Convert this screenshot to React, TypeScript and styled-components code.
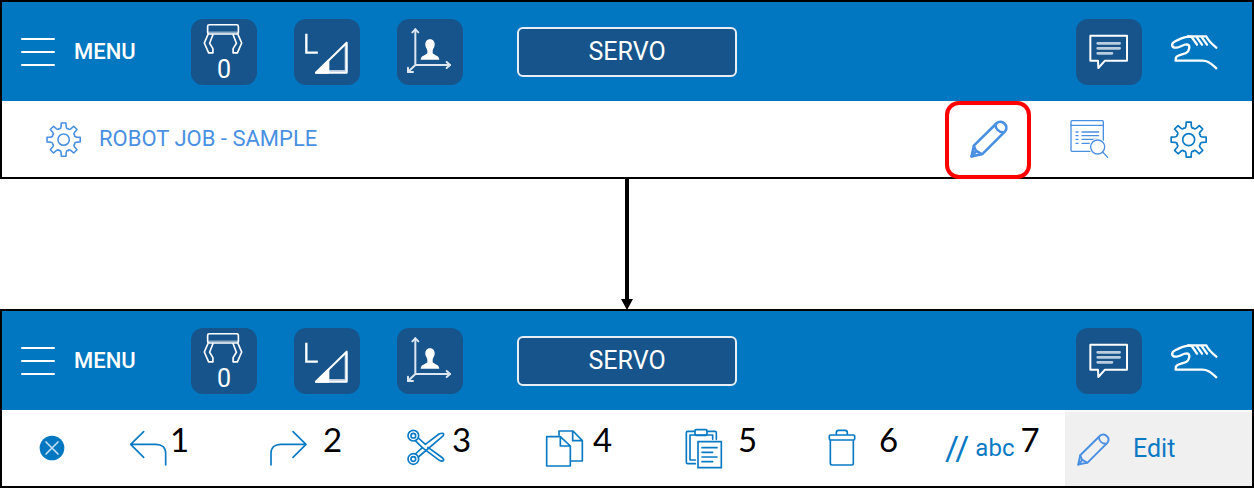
import React from 'react';
import styled, { createGlobalStyle } from 'styled-components';

const color = {
  header: '#0077c0',
  tile: '#17548b',
  accent: '#4a90e2',
  brand: '#0a7ac4',
  soft: '#bccde0',
  active: '#f0f0f0',
  marker: '#ff0000',
};

const GlobalStyle = createGlobalStyle`
  *, *::before, *::after { box-sizing: border-box; }
  body { margin: 0; background: #fff; font-family: Roboto, 'Liberation Sans', sans-serif; }
`;

const Page = styled.main`
  display: flex;
  flex-direction: column;
`;

const Screen = styled.section`
  border: 2px solid #000;
  background: #fff;
`;

const Header = styled.header`
  display: flex;
  align-items: center;
  padding: 17px 34px 16px 18px;
  background: ${color.header};
  color: #fff;
`;

const PlainButton = styled.button`
  display: flex;
  align-items: center;
  margin: 0;
  padding: 0;
  border: 0;
  background: none;
  color: inherit;
  font: inherit;
  cursor: pointer;
`;

const MenuButton = styled(PlainButton)`
  gap: 18px;
  width: 171px;
  font-size: 22px;
  font-weight: 500;
  line-height: 26px;
`;

const TileGroup = styled.div`
  display: flex;
  gap: 37px;
`;

const Tile = styled(PlainButton)`
  flex-direction: column;
  justify-content: center;
  width: 66px;
  height: 66px;
  border-radius: 12px;
  background: ${color.tile};
  font-size: 25px;
  line-height: 28px;
`;

const ServoButton = styled(PlainButton)`
  justify-content: center;
  width: 220px;
  height: 50px;
  margin-left: 54px;
  border: 2px solid #e6eef6;
  border-radius: 6px;
  background: ${color.tile};
  font-size: 25px;
  line-height: 28px;
`;

const HeaderEnd = styled.div`
  display: flex;
  align-items: center;
  gap: 28px;
  margin-left: auto;
`;

const Bar = styled.div`
  display: flex;
  height: 76px;
`;

const JobTitle = styled.h1`
  display: flex;
  align-items: center;
  gap: 18px;
  margin: 0 auto 0 0;
  padding-left: 43px;
  color: ${color.accent};
  font-size: 22px;
  font-weight: 400;
  line-height: 26px;
`;

const Actions = styled.div`
  display: flex;
  gap: 14px;
  padding-right: 21px;
`;

const Action = styled(PlainButton)<{ $marked?: boolean }>`
  position: relative;
  justify-content: center;
  width: 86px;

  &::after {
    content: '';
    display: ${(p) => (p.$marked ? 'block' : 'none')};
    position: absolute;
    inset: 0 0 -2px;
    border: 4px solid ${color.marker};
    border-radius: 14px;
  }
`;

const ArrowRow = styled.div`
  display: flex;
  justify-content: center;
`;

const CloseButton = styled(PlainButton)`
  width: 126px;
  padding-left: 37px;
`;

const Tools = styled.div`
  display: grid;
  flex: 1;
  grid-template-columns: repeat(5, 139fr) 122fr 120fr;
`;

const ToolCell = styled.div<{ $gap: number }>`
  display: flex;
  align-items: center;
  gap: ${(p) => p.$gap}px;
`;

const Callout = styled.span`
  padding-bottom: 18px;
  color: #000;
  font-family: Lato, sans-serif;
  font-size: 33px;
  line-height: 36px;
`;

const CommentButton = styled(PlainButton)`
  gap: 6px;
  color: ${color.brand};
  font-size: 24px;
  line-height: 28px;
`;

const Slashes = styled.span`
  font-size: 34px;
  line-height: 36px;
`;

const EditTab = styled(PlainButton)`
  gap: 24px;
  width: 187px;
  padding-left: 11px;
  border-top: 2px solid #fafafa;
  background: ${color.active};
  color: ${color.brand};
  font-size: 25px;
  line-height: 28px;
`;

const Glyph = styled.svg<{ $weight?: number }>`
  display: block;
  flex: none;
  overflow: visible;
  fill: none;
  stroke: currentColor;
  stroke-width: ${(p) => p.$weight ?? 5};
  stroke-linecap: round;
  stroke-linejoin: round;
`;

const ToolGlyph = styled(Glyph).attrs({ width: 40, height: 40 })`
  color: ${color.brand};
`;

/* Eight-tooth outline, built once around the origin. */
const gearPath = (() => {
  const at = (radius: number, degrees: number) => {
    const a = (degrees * Math.PI) / 180;
    return `${(radius * Math.sin(a)).toFixed(1)} ${(-radius * Math.cos(a)).toFixed(1)}`;
  };
  let d = '';
  for (let i = 0; i < 8; i += 1) {
    const c = i * 45;
    d += `${i ? 'L' : 'M'}${at(42, c - 11)} L${at(53, c - 8)} L${at(53, c + 8)} L${at(42, c + 11)} `;
    d += `Q${at(34, c + 16)} ${at(38, c + 22)} Q${at(34, c + 29)} ${at(42, c + 34)} `;
  }
  return `${d}Z`;
})();

const Gear = ({ size, tint }: { size: number; tint: string }) => (
  <Glyph width={size} height={size} viewBox="-59 -59 114 114" color={tint}>
    <path d={gearPath} />
    <circle r="18" />
  </Glyph>
);

const Pencil = ({ size, weight }: { size: number; weight: number }) => (
  <Glyph width={size} height={size} viewBox="118 90 117 117" color={color.accent} $weight={weight}>
    <path d="M126 202 L133 169 L203 100 C218 86 243 108 229 125 L159 195 Z" />
    <path d="M199 104 C200 118 210 128 225 128" />
    <path d="M133 170 L139 184 L157 195" />
    <path d="M126 202 L140 186" />
  </Glyph>
);

function TopBar() {
  return (
    <Header>
      <MenuButton type="button">
        <Glyph width="36" height="30" viewBox="0 0 36 30" $weight={2}>
          <path d="M2 2 H34 M2 15 H34 M2 28 H34" />
        </Glyph>
        MENU
      </MenuButton>
      <TileGroup>
        <Tile type="button" aria-label="Tool 0">
          <Glyph width="42" height="36" viewBox="611 64 127 108">
            <rect x="625" y="78" width="93" height="28" rx="5" />
            <path d="M628 101 H715" strokeOpacity="0.5" />
            <path d="M626 108 L615 133 L628 163 H641 V150 L631 134 L641 108" />
            <path d="M717 108 L728 133 L715 163 H702 V150 L712 134 L702 108" />
          </Glyph>
          <span>0</span>
        </Tile>
        <Tile type="button" aria-label="Low speed">
          <Glyph width="66" height="66" viewBox="72 57 198 198" $weight={6}>
            <path d="M176 214 H228 V132" stroke={color.soft} strokeWidth="8" />
            <path d="M138 218 L230 128 V218 Z" />
            <path d="M138 218 L175 182 V218 Z" fill="currentColor" />
            <g strokeWidth="7">
              <path d="M109 105 V158 H140" strokeLinecap="square" strokeLinejoin="miter" />
            </g>
          </Glyph>
        </Tile>
        <Tile type="button" aria-label="User coordinates">
          <Glyph width="66" height="66" viewBox="382 57 198 198" $weight={6}>
            <g stroke="#dce6f0">
              <path d="M437 195 V88 M437 195 H541 M437 195 L415 216" />
              <path d="M428 97 L437 88 L446 97 M531 186 L541 195 L531 204 M415 203 V216 H430" />
            </g>
            <path
              d="M481 118 C491 118 496 126 495 136 C494 144 489 147 489 153 V160 C495 167 508 166 509 179 H453 C454 166 467 167 473 160 V153 C473 147 468 144 467 136 C466 126 471 118 481 118 Z"
              fill="currentColor"
              stroke="none"
            />
          </Glyph>
        </Tile>
      </TileGroup>
      <ServoButton type="button">SERVO</ServoButton>
      <HeaderEnd>
        <Tile type="button" aria-label="Messages">
          <Glyph width="66" height="66" viewBox="79 58 198 198" $weight={6}>
            <path d="M122 108 H232 V183 H166 L146 205 L145 183 H122 Z" />
            <path d="M144 131 H210 M144 146 H210 M144 161 H187" stroke={color.soft} strokeWidth="8" />
          </Glyph>
        </Tile>
        <PlainButton type="button" aria-label="Manual teach">
          <Glyph width="48" height="40" viewBox="361 97 144 120" $weight={7}>
            <path d="M442 135 L426 112 C410 107 397 116 378 124 C362 131 365 145 380 144 C392 143 400 134 411 134 C422 135 420 147 415 155 C408 165 390 163 381 171 C377 175 378 179 378 183 H455 C476 182 485 193 500 206" />
            <path d="M415 110 H470 C475 122 488 134 500 144 M440 111 L457 135 M455 111 L472 135" />
          </Glyph>
        </PlainButton>
      </HeaderEnd>
    </Header>
  );
}

function Tool({ label, number, gap, children }: {
  label: string;
  number: number;
  gap: number;
  children: React.ReactNode;
}) {
  return (
    <ToolCell $gap={gap}>
      <PlainButton type="button" aria-label={label}>{children}</PlainButton>
      <Callout>{number}</Callout>
    </ToolCell>
  );
}

export default function App() {
  return (
    <>
      <GlobalStyle />
      <Page>
        <Screen>
          <TopBar />
          <Bar>
            <JobTitle>
              <Gear size={36} tint={color.accent} />
              ROBOT JOB - SAMPLE
            </JobTitle>
            <Actions>
              <Action type="button" aria-label="Edit" $marked>
                <Pencil size={38} weight={8} />
              </Action>
              <Action type="button" aria-label="Search">
                <Glyph width="38" height="38" viewBox="418 92 114 114" color={color.accent} $weight={4}>
                  <rect x="424" y="94" width="97" height="92" rx="3" />
                  <path d="M424 108 H521" />
                  <path d="M439 128 H445 M457 128 H507 M439 139 H445 M457 139 H507 M439 150 H445 M457 150 H507 M439 162 H445 M457 162 H490" />
                  <circle cx="504" cy="173" r="26" fill="#fff" stroke="none" />
                  <circle cx="504" cy="173" r="21" />
                  <path d="M519 188 L534 204" />
                </Glyph>
              </Action>
              <Action type="button" aria-label="Settings">
                <Gear size={38} tint={color.brand} />
              </Action>
            </Actions>
          </Bar>
        </Screen>

        <ArrowRow>
          <svg width="12" height="130" viewBox="0 0 12 130">
            <path d="M4 0 H8 V120 H12 L6 131 L0 120 H4 Z" />
          </svg>
        </ArrowRow>

        <Screen>
          <TopBar />
          <Bar>
            <CloseButton type="button" aria-label="Close">
              <Glyph width="26" height="26" viewBox="-39 -39 78 78" color={color.header}>
                <circle r="37" fill="currentColor" stroke="none" />
                <path d="M-18 -18 L18 18 M18 -18 L-18 18" stroke="#c4e0f2" />
              </Glyph>
            </CloseButton>
            <Tools>
              <Tool label="Undo" number={1} gap={2}>
                <ToolGlyph viewBox="384 84 120 120">
                  <path d="M497 195 V160 C497 143 486 133 468 133 H392 M431 95 L392 133 L431 172" />
                </ToolGlyph>
              </Tool>
              <Tool label="Redo" number={2} gap={16}>
                <ToolGlyph viewBox="802 84 120 120">
                  <path d="M814 195 V160 C814 143 825 133 843 133 H919 M880 95 L919 133 L880 172" />
                </ToolGlyph>
              </Tool>
              <Tool label="Cut" number={3} gap={6}>
                <ToolGlyph viewBox="78 84 120 120">
                  <circle cx="100" cy="107" r="16" />
                  <circle cx="100" cy="107" r="7" />
                  <circle cx="100" cy="177" r="16" />
                  <circle cx="100" cy="177" r="7" />
                  <path d="M106 122 L127 143 L106 162 M115 114 L136 133 L177 102 C184 99 190 99 191 102 C192 107 187 110 184 112 L115 171" />
                  <path d="M127 143 L178 181 C184 184 190 184 191 181 C192 177 188 174 184 171 L144 142" />
                </ToolGlyph>
              </Tool>
              <Tool label="Copy" number={4} gap={8}>
                <ToolGlyph viewBox="495 84 120 120">
                  <path d="M537 106 V93 H579 L607 122 V183 H574 M578 94 V122 H606" />
                  <path d="M500 110 H541 L571 138 V198 H500 Z M541 111 V138 H570" />
                </ToolGlyph>
              </Tool>
              <Tool label="Paste" number={5} gap={14}>
                <ToolGlyph viewBox="912 84 120 120">
                  <path d="M946 191 H923 Q919 191 919 187 V98 Q919 94 923 94 H944 M982 94 H1005 Q1009 94 1009 98 V118" />
                  <path d="M946 180 H930 V105 H998 V118" />
                  <rect x="945" y="89" width="36" height="17" rx="3" />
                  <path d="M954 125 H1024 V203 H954 Z M966 143 H1011 M966 157 H998 M966 171 H1011 M966 185 H998" />
                </ToolGlyph>
              </Tool>
              <Tool label="Delete" number={6} gap={16}>
                <ToolGlyph viewBox="189 84 120 120">
                  <path d="M229 103 V98 Q229 91 236 91 H255 Q262 91 262 98 V103" />
                  <rect x="208" y="105" width="76" height="15" rx="3" />
                  <path d="M211 121 V190 Q211 195 216 195 H275 Q280 195 280 190 V121" />
                </ToolGlyph>
              </Tool>
              <ToolCell $gap={6}>
                <CommentButton type="button">
                  <Slashes>//</Slashes>
                  <span>abc</span>
                </CommentButton>
                <Callout>7</Callout>
              </ToolCell>
            </Tools>
            <EditTab type="button">
              <Pencil size={33} weight={7} />
              Edit
            </EditTab>
          </Bar>
        </Screen>
      </Page>
    </>
  );
}
